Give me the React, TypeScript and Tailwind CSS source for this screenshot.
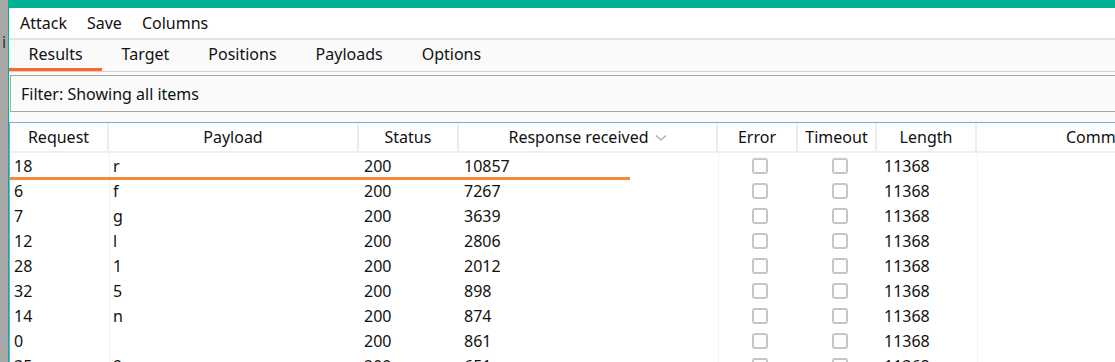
import React from "react";

const rows = [
  ["18", "r", "200", "10857"],
  ["6", "f", "200", "7267"],
  ["7", "g", "200", "3639"],
  ["12", "l", "200", "2806"],
  ["28", "1", "200", "2012"],
  ["32", "5", "200", "898"],
  ["14", "n", "200", "874"],
  ["0", "", "200", "861"],
  ["35", "9", "200", "651"],
];

function Box() {
  return <div className="h-[16px] w-[16px] rounded-[3px] border-2 border-[#c6c6c6] bg-white" />;
}

export default function App() {
  const font = { fontFamily: '"Noto Sans", "Open Sans", sans-serif' };
  return (
    <div className="flex h-[362px] w-[1115px] overflow-hidden bg-white text-[16px] leading-none text-[#111]" style={font}>
      <div className="w-[8px] shrink-0 bg-[#a8a8a8] pt-[34px] pl-[2px] text-[#333]">i</div>
      <div className="flex min-w-0 flex-1 flex-col border-l border-[#00b294]">
        <div className="h-[8px] shrink-0 bg-[#00b294]" />

        {/* menu */}
        <div className="flex h-[30px] shrink-0 items-center gap-[20px] pl-[11px]">
          <span>Attack</span>
          <span>Save</span>
          <span>Columns</span>
        </div>

        {/* tabs */}
        <div className="flex h-[34px] shrink-0 border-t-2 border-b border-t-[#e3e3e3] border-b-[#d2d2d2] bg-[#fafafa]">
          {["Results", "Target", "Positions", "Payloads", "Options"].map((t, i) => (
            <div
              key={t}
              className={
                "flex items-center px-[19.5px] pb-[4px] " +
                (i === 0 ? "border-b-[3px] border-[#ff6633] pt-[3px]" : "")
              }
            >
              {t}
            </div>
          ))}
        </div>

        <div className="flex shrink-0 flex-col bg-[#fafafa] pt-[3px]">
          <div className="ml-[1px] flex h-[37px] items-center border border-r-0 border-[#a6a6a6] bg-[#fafafa] pl-[10px]">
            Filter: Showing all items
          </div>
          <div className="h-[10px]" />
        </div>

        {/* table */}
        <div className="relative flex-1 border-t border-l border-[#7ea8d8] bg-white">
          <div className="flex h-[30px] border-b-2 border-[#efefef]">
            <Head w="w-[99px]">Request</Head>
            <Head w="w-[250px]">Payload</Head>
            <Head w="w-[100px]">Status</Head>
            <Head w="w-[259px]">
              <span>Response received</span>
              <svg width="12" height="8" viewBox="0 0 12 8" className="ml-[6px] mt-[2px]">
                <path d="M1 1.5 L6 6 L11 1.5" fill="none" stroke="#a8a8a8" strokeWidth="1.2" />
              </svg>
            </Head>
            <Head w="w-[80px]">Error</Head>
            <Head w="w-[79px]">Timeout</Head>
            <Head w="w-[100px]">Length</Head>
            <div className="flex min-w-0 flex-1 items-center overflow-hidden whitespace-nowrap pl-[89px]">Comment</div>
          </div>

          {rows.map((r, i) => (
            <div key={i} className="flex h-[25px] items-center">
              <div className="w-[99px] shrink-0 pl-[4px]">{r[0]}</div>
              <div className="flex h-full w-[250px] shrink-0 items-center border-l border-[#f2f2f2] pl-[3px]">{r[1]}</div>
              <div className="w-[100px] shrink-0 pl-[5px]">{r[2]}</div>
              <div className="w-[259px] shrink-0 pl-[5px]">{r[3]}</div>
              <div className="flex h-full w-[80px] shrink-0 items-center justify-center border-l border-[#f2f2f2] pl-[3px]">
                <Box />
              </div>
              <div className="flex w-[79px] shrink-0 justify-center pl-[4px]">
                <Box />
              </div>
              <div className="w-[100px] shrink-0 pl-[7px]">11368</div>
              <div className="h-full flex-1 border-l border-[#f2f2f2]" />
            </div>
          ))}

          <div className="absolute top-[54px] left-0 h-[3px] w-[620px] bg-[#f5883a]" />
        </div>
      </div>
    </div>
  );
}

function Head({ w, children }: { w: string; children: React.ReactNode }) {
  return (
    <div className={"flex shrink-0 items-center justify-center border-r-2 border-[#ececec] " + w}>{children}</div>
  );
}
